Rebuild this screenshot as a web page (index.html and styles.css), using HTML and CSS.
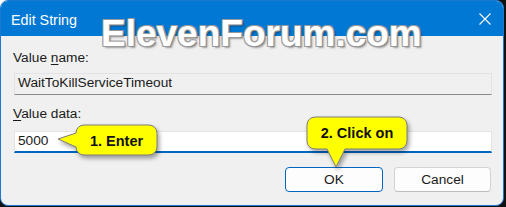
FILE: index.html
```html
<!DOCTYPE html>
<html lang="en">
<head>
  <meta charset="UTF-8">
  <title>Edit String</title>
  <link rel="stylesheet" href="styles.css">
</head>
<body>

  <div class="window">
    <!-- Title bar -->
    <div class="titlebar">
      <span class="title">Edit String</span>
      <svg class="close" width="12" height="12" viewBox="0 0 12 12">
        <path d="M0.5 0.5 L11.5 11.5 M11.5 0.5 L0.5 11.5" stroke="#fff" stroke-width="1.1" fill="none"/>
      </svg>
    </div>

    <div class="watermark">ElevenForum.com</div>

    <div class="content">
      <div class="label">Value <u>n</u>ame:</div>
      <div class="field readonly">WaitToKillServiceTimeout</div>

      <div class="label gap"><u>V</u>alue data:</div>
      <div class="field active">5000</div>

      <div class="buttons">
        <button class="btn primary">OK</button>
        <button class="btn">Cancel</button>
      </div>
    </div>

    <!-- Callouts -->
    <div class="callout callout-left">
      <svg width="104" height="40" viewBox="0 0 104 40">
        <path d="M1 15 L19 9 A8 8 0 0 1 27 1 L92 1 A8 8 0 0 1 100 9 L100 23 A8 8 0 0 1 92 31 L27 31 A8 8 0 0 1 19 23 Z"/>
      </svg>
      <span class="callout-text">1. Enter</span>
    </div>

    <div class="callout callout-down">
      <svg width="108" height="58" viewBox="0 0 108 58">
        <path d="M2 9 A8 8 0 0 1 10 1 L94 1 A8 8 0 0 1 102 9 L102 25 A8 8 0 0 1 94 33 L40 33 L31 51 L22 33 L10 33 A8 8 0 0 1 2 25 Z"/>
      </svg>
      <span class="callout-text">2. Click on</span>
    </div>
  </div>

</body>
</html>
```

FILE: styles.css
```css
* {
  margin: 0;
  padding: 0;
  box-sizing: border-box;
}

body {
  width: 506px;
  height: 207px;
  overflow: hidden;
  font-family: "Liberation Sans", Arial, sans-serif;
  background: linear-gradient(135deg, #ffffff 12px, #111111 12px);
}

.window {
  position: relative;
  width: 504px;
  height: 206px;
  background-color: #f0f0f0;
  border: 1px solid #1a78d0;
  border-radius: 8px;
  overflow: hidden;
}

/* Title bar */
.titlebar {
  height: 35px;
  background-color: #0078d4;
  display: flex;
  align-items: center;
  justify-content: space-between;
  padding: 2px 12px 0 10px;
}

.title {
  color: #fff;
  font-size: 14.3px;
}

.close {
  margin-top: -2px;
}

.watermark {
  position: absolute;
  left: 100px;
  top: 14px;
  font-size: 37px;
  line-height: 37px;
  font-weight: bold;
  color: #fff;
  text-shadow: -1px -1px 0 #9a9a9a, 1px -1px 0 #9a9a9a, -1px 1px 0 #9a9a9a, 1px 1px 0 #8a8a8a,
    2px 2px 2px rgba(0, 0, 0, 0.35);
}

/* Form */
.content {
  padding: 14px 11px 0 12px;
  font-size: 13.7px;
  color: #1a1a1a;
}

.label {
  line-height: 16px;
  margin-bottom: 7px;
}

.label.gap {
  margin-top: 11px;
  margin-bottom: 9px;
}

.label u {
  text-underline-offset: 2px;
}

.field {
  height: 22px;
  line-height: 16px;
  padding: 1px 3px 0;
  margin-left: 1px;
  border: 1px solid #e3e3e3;
}

.field.readonly {
  background-color: #f0f0f0;
  border-bottom-color: #8a8a8a;
}

.field.active {
  background-color: #fff;
  border-bottom: 2px solid #0067c0;
}

.buttons {
  display: flex;
  justify-content: flex-end;
  gap: 11px;
  margin-top: 14px;
  padding-right: 1px;
}

.btn {
  width: 97px;
  height: 25px;
  font-family: inherit;
  font-size: 13.7px;
  color: #1a1a1a;
  background-color: #fdfdfd;
  border: 1px solid #d3d3d3;
  border-bottom-color: #bdbdbd;
  border-radius: 4px;
}

.btn.primary {
  width: 98px;
  border: 1px solid #0067c0;
}

/* Callouts */
.callout {
  position: absolute;
}

.callout svg {
  display: block;
  overflow: visible;
  filter: drop-shadow(2px 3px 2px rgba(0, 0, 0, 0.35));
}

.callout path {
  fill: #ffff00;
  stroke: #7c7c7c;
  stroke-width: 1;
}

.callout-text {
  position: absolute;
  top: 0;
  font-size: 14.5px;
  font-weight: bold;
  color: #111;
  line-height: 30px;
  text-align: center;
}

.callout-left {
  left: 56px;
  top: 123px;
}

.callout-left .callout-text {
  left: 19px;
  width: 81px;
  top: 2px;
}

.callout-down {
  left: 304px;
  top: 115px;
}

.callout-down .callout-text {
  left: 2px;
  width: 100px;
  top: 2px;
}
```
